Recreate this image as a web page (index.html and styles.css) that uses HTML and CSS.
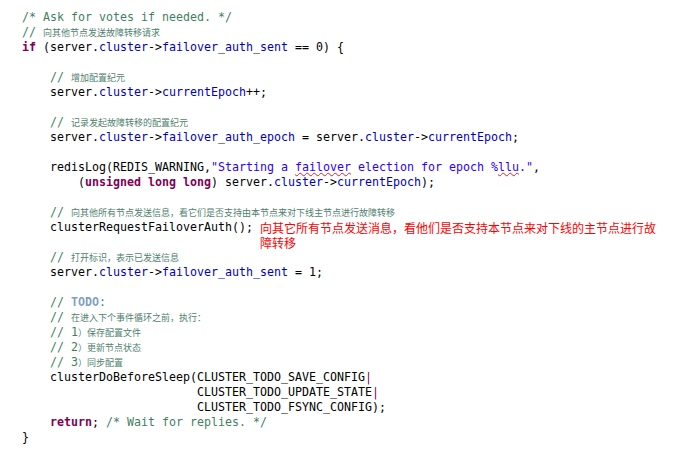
FILE: index.html
```html
<!DOCTYPE html>
<html>
<head>
<meta charset="utf-8">
<link rel="stylesheet" href="styles.css">
</head>
<body>
<div class="code">
<div class="ln"><span class="c">/* Ask for votes if needed. */</span></div>
<div class="ln"><span class="c">// <span class="cj">向其他节点发送故障转移请求</span></span></div>
<div class="ln"><span class="k">if</span> (server.<span class="f">cluster</span>-&gt;<span class="f">failover_auth_sent</span> == 0) {</div>
<div class="ln"> </div>
<div class="ln">    <span class="c">// <span class="cj">增加配置纪元</span></span></div>
<div class="ln">    server.<span class="f">cluster</span>-&gt;<span class="f">currentEpoch</span>++;</div>
<div class="ln"> </div>
<div class="ln">    <span class="c">// <span class="cj">记录发起故障转移的配置纪元</span></span></div>
<div class="ln">    server.<span class="f">cluster</span>-&gt;<span class="f">failover_auth_epoch</span> = server.<span class="f">cluster</span>-&gt;<span class="f">currentEpoch</span>;</div>
<div class="ln"> </div>
<div class="ln">    redisLog(REDIS_WARNING,<span class="s">"Starting a <span class="sp">failover</span> election for epoch %<span class="sp">llu</span>."</span>,</div>
<div class="ln">        (<span class="k">unsigned long long</span>) server.<span class="f">cluster</span>-&gt;<span class="f">currentEpoch</span>);</div>
<div class="ln"> </div>
<div class="ln">    <span class="c">// <span class="cj">向其他所有节点发送信息，看它们是否支持由本节点来对下线主节点进行故障转移</span></span></div>
<div class="ln row">    clusterRequestFailoverAuth(); <span class="note">向其它所有节点发送消息，看他们是否支持本节点来对下线的主节点进行故障转移</span></div>
<div class="ln">    <span class="c">// <span class="cj">打开标识，表示已发送信息</span></span></div>
<div class="ln">    server.<span class="f">cluster</span>-&gt;<span class="f">failover_auth_sent</span> = 1;</div>
<div class="ln"> </div>
<div class="ln">    <span class="c">// <span class="todo">TODO</span>:</span></div>
<div class="ln">    <span class="c">// <span class="cj">在进入下个事件循环之前，执行：</span></span></div>
<div class="ln">    <span class="c">// 1<span class="cj">）保存配置文件</span></span></div>
<div class="ln">    <span class="c">// 2<span class="cj">）更新节点状态</span></span></div>
<div class="ln">    <span class="c">// 3<span class="cj">）同步配置</span></span></div>
<div class="ln">    clusterDoBeforeSleep(CLUSTER_TODO_SAVE_CONFIG<span class="k2">|</span></div>
<div class="ln">                         CLUSTER_TODO_UPDATE_STATE<span class="k2">|</span></div>
<div class="ln">                         CLUSTER_TODO_FSYNC_CONFIG);</div>
<div class="ln">    <span class="k">return</span>; <span class="c">/* Wait for replies. */</span></div>
<div class="ln">}</div>
</div>
</body>
</html>
```
FILE: styles.css
```css
html, body {
  margin: 0;
  padding: 0;
  background: #ffffff;
}
.code {
  padding: 10px 0 0 22px;
  font-family: "DejaVu Sans Mono", "Liberation Mono", monospace;
  font-size: 11.63px;
  color: #000000;
}
.ln {
  white-space: pre;
  height: 15px;
  line-height: 15px;
}
.row {
  height: 30px;
  display: flex;
  align-items: flex-start;
}
.c { color: #3f7f5f; }
.cj {
  font-family: "Noto Sans CJK SC", sans-serif;
  font-size: 9px;
  color: #4f7f6f;
}
.k { color: #7f0055; font-weight: bold; }
.k2 { color: #7f0055; }
.f { color: #0000c0; }
.s { color: #2a00ff; }
.todo { color: #7f9fbf; font-weight: bold; }
.sp {
  text-decoration: underline wavy #e02020;
  text-decoration-thickness: 1px;
  text-underline-offset: 1px;
}
.note {
  white-space: normal;
  width: 400px;
  flex: none;
  font-family: "Noto Sans CJK SC", sans-serif;
  font-size: 12px;
  line-height: 15px;
  color: #ff0000;
}
```
